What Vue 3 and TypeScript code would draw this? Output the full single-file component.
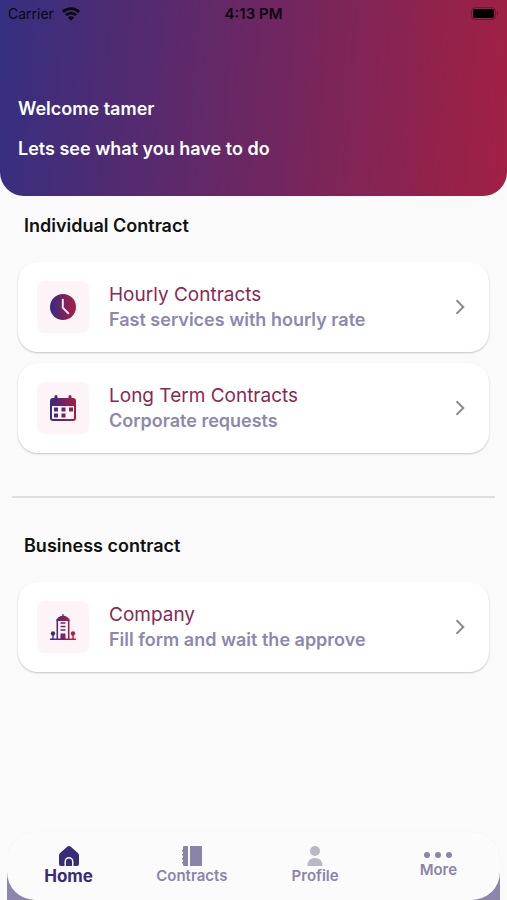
<script setup lang="ts">
import { ref } from 'vue'

interface Service {
  icon: 'clock' | 'calendar' | 'company'
  title: string
  note: string
}
interface Section {
  heading: string
  services: Service[]
}
type TabId = 'home' | 'contracts' | 'profile' | 'more'

const sections: Section[] = [
  {
    heading: 'Individual Contract',
    services: [
      { icon: 'clock', title: 'Hourly Contracts', note: 'Fast services with hourly rate' },
      { icon: 'calendar', title: 'Long Term Contracts', note: 'Corporate requests' },
    ],
  },
  {
    heading: 'Business contract',
    services: [{ icon: 'company', title: 'Company', note: 'Fill form and wait the approve' }],
  },
]

const tabs: { id: TabId; label: string }[] = [
  { id: 'home', label: 'Home' },
  { id: 'contracts', label: 'Contracts' },
  { id: 'profile', label: 'Profile' },
  { id: 'more', label: 'More' },
]
const activeTab = ref<TabId>('home')
</script>

<template>
  <div class="screen">
    <header class="hero">
      <div class="status">
        <div class="carrier">
          <span>Carrier</span>
          <svg class="wifi" viewBox="0 0 18 14" aria-hidden="true">
            <path d="M.9 5a11.400 11.400 0 0 1 16.200 0M3.900 8.200a7.200 7.200 0 0 1 10.200 0" fill="none" stroke="currentColor" stroke-width="2.600" />
            <path d="M9 13.800 5.800 10.600a4.500 4.500 0 0 1 6.400 0z" fill="currentColor" />
          </svg>
        </div>
        <span class="time">4:13 PM</span>
        <svg class="battery" viewBox="0 0 28 14" aria-hidden="true">
          <rect x="0.5" y="0.5" width="24" height="12" rx="3.5" fill="none" stroke="#000" stroke-opacity=".3" />
          <rect x="2" y="2" width="21" height="9" rx="2" fill="#000" />
          <path d="M26 4.500q2 2 0 4z" fill="#000" fill-opacity=".4" />
        </svg>
      </div>
      <h1 class="greeting">Welcome tamer</h1>
      <p class="greeting">Lets see what you have to do</p>
    </header>

    <main class="content">
      <section v-for="section in sections" :key="section.heading" class="section">
        <h2 class="heading">{{ section.heading }}</h2>
        <div class="cards">
          <button v-for="service in section.services" :key="service.title" type="button" class="card">
            <span class="tile">
              <svg v-if="service.icon === 'clock'" viewBox="0 0 26 26" aria-hidden="true">
                <defs>
                  <linearGradient id="clock-fill" x1="0" x2="1" y1="0" y2="0">
                    <stop offset="0" stop-color="#352b82" /><stop offset="1" stop-color="#ac1c40" />
                  </linearGradient>
                </defs>
                <circle cx="13" cy="13" r="13" fill="url(#clock-fill)" />
                <path d="M12.800 5.800v8l5.500 5.400" fill="none" stroke="#f4e4ec" stroke-width="2" stroke-linecap="round" stroke-linejoin="round" />
              </svg>
              <svg v-else-if="service.icon === 'calendar'" viewBox="0 0 26 26" aria-hidden="true">
                <defs>
                  <linearGradient id="calendar-fill" gradientUnits="userSpaceOnUse" x1="0" x2="26" y1="0" y2="0">
                    <stop offset="0" stop-color="#352b82" /><stop offset="1" stop-color="#ac1c40" />
                  </linearGradient>
                </defs>
                <g fill="url(#calendar-fill)">
                  <path fill-rule="evenodd" d="M3 3h20a3 3 0 0 1 3 3v17a3 3 0 0 1-3 3H3a3 3 0 0 1-3-3V6a3 3 0 0 1 3-3zM2 11v12q0 1 1 1h20q1 0 1-1V11z" />
                  <rect x="4.500" y="0" width="3" height="5" rx="1.500" />
                  <rect x="18.500" y="0" width="3" height="5" rx="1.500" />
                  <path d="M4 12.500h4v4H4zM11.500 12.500h4v4h-4zM19 12.500h4v4h-4zM4 18.500h4v4H4zM11.500 18.500h4v4h-4z" />
                </g>
              </svg>
              <svg v-else viewBox="0 0 26 26" aria-hidden="true">
                <defs>
                  <linearGradient id="company-fill" gradientUnits="userSpaceOnUse" x1="0" x2="26" y1="0" y2="0">
                    <stop offset="0" stop-color="#352b82" /><stop offset="1" stop-color="#c01c40" />
                  </linearGradient>
                </defs>
                <g fill="url(#company-fill)">
                  <path d="M12.400 0h1.200v1.600q3.900.7 5.600 3.400h.4v2H6.400V5h.4q1.700-2.700 5.600-3.400z" />
                  <path d="M6.500 6.500h1.600V25H6.500zM17.900 6.500h1.600V25h-1.600zM0 24.400h26V26H0zM10.500 8.200h5v1.500h-5zM10.500 11.700h5v1.500h-5zM10.500 15.200h5v1.500h-5zM10.500 19.500h5V25h-5z" />
                  <circle cx="3" cy="19.500" r="2.200" />
                  <circle cx="23" cy="19.500" r="2.200" />
                  <path d="M2.300 20h1.400v5H2.300zM22.300 20h1.400v5h-1.400z" />
                </g>
              </svg>
            </span>
            <span class="text">
              <span class="title">{{ service.title }}</span>
              <span class="note">{{ service.note }}</span>
            </span>
            <svg class="chevron" viewBox="0 0 10 16" aria-hidden="true">
              <path d="M1.500 1.200 8.300 8l-6.800 6.800" fill="none" stroke="currentColor" stroke-width="2" />
            </svg>
          </button>
        </div>
      </section>
    </main>

    <div class="dock">
      <nav class="tabs" aria-label="Main">
        <button
          v-for="tab in tabs"
          :key="tab.id"
          type="button"
          :class="['tab', tab.id, { active: tab.id === activeTab }]"
          :aria-current="tab.id === activeTab ? 'page' : undefined"
          @click="activeTab = tab.id"
        >
          <svg v-if="tab.id === 'home'" class="glyph" viewBox="0 0 20 20" aria-hidden="true">
            <path d="M10 0q1 0 1.800.700l6.800 6Q20 8 20 9.500V18q0 2-2 2h-3.500v-4.500a4.500 4.500 0 0 0-9 0V20H2q-2 0-2-2V9.500Q0 8 1.400 6.700l6.800-6Q9 0 10 0z" fill="currentColor" />
            <path d="M7 20v-4.500a3 3 0 0 1 6 0V20z" fill="currentColor" />
          </svg>
          <svg v-else-if="tab.id === 'contracts'" class="glyph" viewBox="0 0 20 20" aria-hidden="true">
            <path d="M8 0H19q1 0 1 1v18q0 1-1 1H8zM2 0h4v20H2q-1 0-1-1v-1.500H0V16h1v-2.500H0V12h1V9.500H0V8h1V5.500H0V4h1V1q0-1 1-1z" fill="currentColor" />
          </svg>
          <svg v-else-if="tab.id === 'profile'" class="glyph" viewBox="0 0 20 20" aria-hidden="true">
            <circle cx="10" cy="5" r="5" fill="#b9b8c4" />
            <path d="M2.500 20q0-8 7.500-8t7.500 8z" fill="#b9b8c4" />
          </svg>
          <svg v-else class="dots" viewBox="0 0 28 6" aria-hidden="true">
            <circle cx="3" cy="3" r="3" fill="currentColor" />
            <circle cx="14" cy="3" r="3" fill="currentColor" />
            <circle cx="25" cy="3" r="3" fill="currentColor" />
          </svg>
          <span>{{ tab.label }}</span>
        </button>
      </nav>
    </div>
  </div>
</template>

<style>
body {
  margin: 0;
  background: #fafafa;
}
</style>

<style scoped>
.screen {
  display: flex;
  flex-direction: column;
  box-sizing: border-box;
  min-height: 100vh;
  font-family: Inter, "Liberation Sans", sans-serif;
  color: #111;
}
button {
  margin: 0;
  padding: 0;
  border: 0;
  background: none;
  font: inherit;
  color: inherit;
  cursor: pointer;
}
.hero {
  padding-bottom: 35px;
  border-radius: 0 0 24px 24px;
  background: linear-gradient(94deg, #362f81, #6c2762 50%, #a22043);
  color: #fff;
}
.status {
  display: grid;
  grid-template-columns: 1fr auto 1fr;
  align-items: center;
  height: 27px;
  margin-bottom: 70px;
  padding: 0 8px;
  color: #0b0610;
  font-size: 14px;
}
.carrier {
  display: flex;
  align-items: center;
  gap: 8px;
}
.wifi {
  width: 18px;
  height: 14px;
}
.time {
  font-size: 15px;
  font-weight: 600;
}
.battery {
  justify-self: end;
  width: 28px;
  height: 14px;
}
.greeting {
  margin: 0 18px;
  font-size: 18px;
  font-weight: 600;
  line-height: 24px;
}
.greeting + .greeting {
  margin-top: 16px;
}
.content {
  flex: 1;
}
.section {
  padding: 16px 18px 0;
}
.section + .section {
  margin: 43px 12px 0;
  padding: 34px 6px 0;
  border-top: 2px solid #dededf;
}
.heading {
  margin: 0 6px 22px;
  font-size: 18px;
  font-weight: 600;
  line-height: 28px;
}
.cards {
  display: grid;
  gap: 11px;
}
.card {
  display: flex;
  align-items: center;
  height: 90px;
  padding: 0 24px 0 19px;
  border-radius: 20px;
  background: #fff;
  box-shadow: 0 1px 2px rgba(0, 0, 0, 0.22);
  text-align: left;
}
.tile {
  display: grid;
  place-items: center;
  width: 52px;
  height: 52px;
  margin-right: 20px;
  border-radius: 8px;
  background: #fdf4f8;
}
.tile svg {
  width: 26px;
  height: 26px;
}
.text {
  display: grid;
  flex: 1;
}
.title {
  font-size: 19px;
  line-height: 26px;
  color: #8b2852;
}
.note {
  font-size: 18px;
  font-weight: 600;
  line-height: 24px;
  color: #8d88ae;
}
.chevron {
  width: 10px;
  height: 16px;
  color: #8c8c8e;
}
.dock {
  margin: 0 7px;
  border-radius: 32px 32px 0 0;
  background: linear-gradient(transparent 50%, #8d85ab 50%);
}
.tabs {
  display: grid;
  grid-template-columns: repeat(4, 1fr);
  height: 68px;
  border-radius: 28px;
  background: #fbfbfc;
  box-shadow: 0 0 1px rgba(0, 0, 0, 0.08);
}
.tab {
  display: flex;
  flex-direction: column;
  align-items: center;
  padding-top: 14px;
  font-size: 15px;
  font-weight: 600;
  line-height: 20px;
  color: #8b84aa;
}
.tab.active {
  font-size: 17px;
  font-weight: 700;
  color: #382b7a;
}
.tab.more {
  padding-top: 20px;
}
.glyph {
  width: 20px;
  height: 20px;
}
.dots {
  width: 28px;
  height: 6px;
  margin-bottom: 2px;
}
</style>
